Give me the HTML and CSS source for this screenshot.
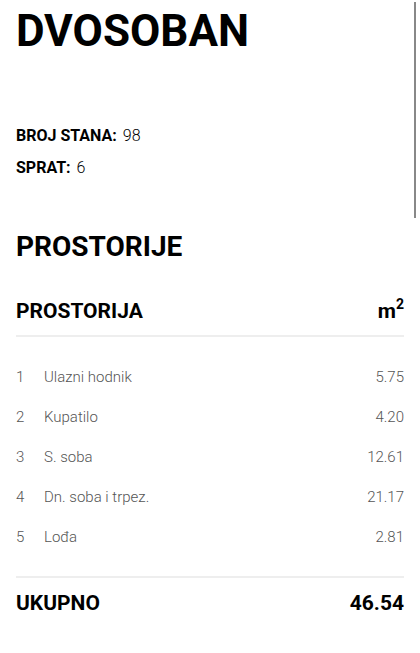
FILE: index.html
```html
<!DOCTYPE html>
<html lang="sr">
<head>
<meta charset="UTF-8">
<meta name="viewport" content="width=device-width, initial-scale=1.0">
<title>Dvosoban</title>
<link rel="stylesheet" href="styles.css">
</head>
<body>
<div class="page">
    <h1 class="title">DVOSOBAN</h1>

    <div class="info">
        <div class="info-row"><strong>BROJ STANA:</strong> <span>98</span></div>
        <div class="info-row"><strong>SPRAT:</strong> <span>6</span></div>
    </div>

    <h2 class="section-title">PROSTORIJE</h2>

    <div class="table-head">
        <span>PROSTORIJA</span>
        <span>m<sup>2</sup></span>
    </div>

    <div class="rooms">
        <div class="room"><span class="num">1</span><span class="name">Ulazni hodnik</span><span class="area">5.75</span></div>
        <div class="room"><span class="num">2</span><span class="name">Kupatilo</span><span class="area">4.20</span></div>
        <div class="room"><span class="num">3</span><span class="name">S. soba</span><span class="area">12.61</span></div>
        <div class="room"><span class="num">4</span><span class="name">Dn. soba i trpez.</span><span class="area">21.17</span></div>
        <div class="room"><span class="num">5</span><span class="name">Lođa</span><span class="area">2.81</span></div>
    </div>

    <div class="total">
        <span>UKUPNO</span>
        <span>46.54</span>
    </div>
</div>
<div class="scrollbar"></div>
</body>
</html>
```

FILE: styles.css
```css
body {
    margin: 0;
    font-family: Roboto, Arial, sans-serif;
    color: #000;
    background: #fff;
}

.page {
    padding: 0 16px 40px 16px;
}

.title {
    margin: 0;
    padding-top: 5px;
    font-size: 44px;
    font-weight: 700;
    line-height: 52px;
}

.info {
    margin-top: 69px;
}

.info-row {
    font-size: 16px;
    line-height: 20px;
    margin-bottom: 12px;
}

.info-row span {
    font-weight: 300;
    margin-left: 2px;
}

.section-title {
    margin: 51px 0 0 0;
    font-size: 28px;
    font-weight: 700;
    line-height: 36px;
}

.table-head {
    display: flex;
    justify-content: space-between;
    align-items: flex-end;
    margin-top: 34px;
    padding-bottom: 12px;
    border-bottom: 2px solid #eee;
    font-size: 21px;
    font-weight: 700;
    line-height: 24px;
}

.table-head sup {
    font-size: 14px;
    line-height: 0;
    vertical-align: 9px;
}

.rooms {
    padding: 20px 0 19px 0;
}

.room {
    display: flex;
    font-size: 15px;
    font-weight: 300;
    color: #555;
    line-height: 20px;
    padding: 10px 0;
}

.room .num {
    width: 28px;
}

.room .name {
    flex: 1;
}

.total {
    display: flex;
    justify-content: space-between;
    border-top: 2px solid #eee;
    padding-top: 13px;
    font-size: 21px;
    font-weight: 700;
    line-height: 24px;
}

.scrollbar {
    position: fixed;
    top: 2px;
    right: 4px;
    width: 2px;
    height: 216px;
    background: #888;
}
```
